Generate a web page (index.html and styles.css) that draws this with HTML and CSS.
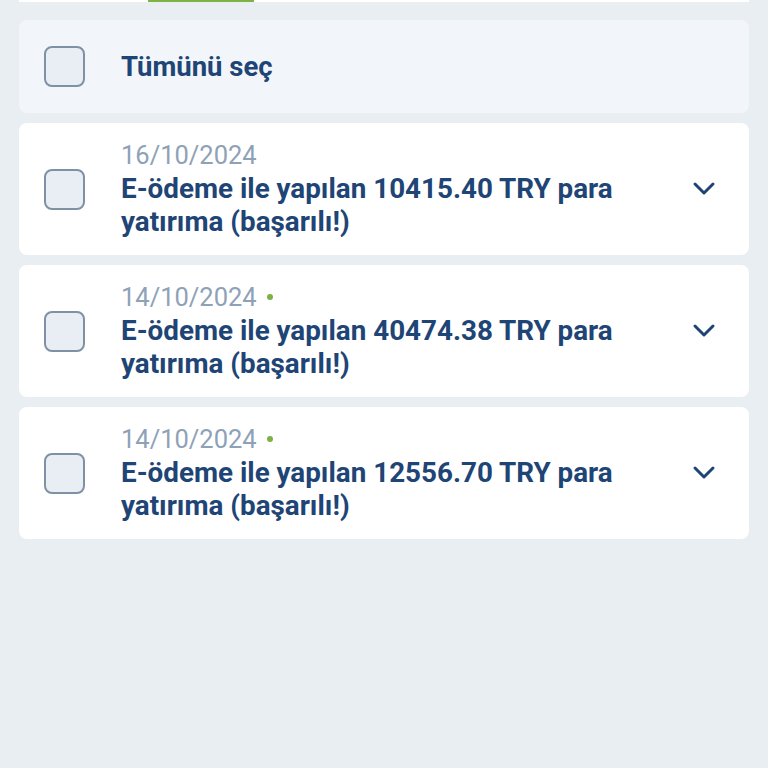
FILE: index.html
```html
<!DOCTYPE html>
<html lang="tr">

<head>
    <meta charset="UTF-8">
    <meta name="viewport" content="width=device-width, initial-scale=1.0">
    <title>İşlemler</title>
    <link rel="stylesheet" href="styles.css">
</head>

<body>
    <div class="tabs">
        <span class="tab-active"></span>
    </div>

    <div class="list">
        <div class="select-all">
            <span class="check"></span>
            <h4>Tümünü seç</h4>
        </div>

        <div class="item">
            <span class="check"></span>
            <div class="info">
                <p class="date">16/10/2024</p>
                <h4>E-ödeme ile yapılan 10415.40 TRY para yatırıma (başarılı!)</h4>
            </div>
            <svg class="chevron" width="24" height="16" viewBox="0 0 24 16">
                <path d="M3 3 L12 12 L21 3" fill="none" stroke="#1f4474" stroke-width="3" stroke-linecap="round" stroke-linejoin="round" />
            </svg>
        </div>

        <div class="item">
            <span class="check"></span>
            <div class="info">
                <p class="date">14/10/2024 <span class="dot"></span></p>
                <h4>E-ödeme ile yapılan 40474.38 TRY para yatırıma (başarılı!)</h4>
            </div>
            <svg class="chevron" width="24" height="16" viewBox="0 0 24 16">
                <path d="M3 3 L12 12 L21 3" fill="none" stroke="#1f4474" stroke-width="3" stroke-linecap="round" stroke-linejoin="round" />
            </svg>
        </div>

        <div class="item">
            <span class="check"></span>
            <div class="info">
                <p class="date">14/10/2024 <span class="dot"></span></p>
                <h4>E-ödeme ile yapılan 12556.70 TRY para yatırıma (başarılı!)</h4>
            </div>
            <svg class="chevron" width="24" height="16" viewBox="0 0 24 16">
                <path d="M3 3 L12 12 L21 3" fill="none" stroke="#1f4474" stroke-width="3" stroke-linecap="round" stroke-linejoin="round" />
            </svg>
        </div>
    </div>
</body>

</html>
```

FILE: styles.css
```css
* {
    margin: 0;
    padding: 0;
    box-sizing: border-box;
    font-family: Roboto, "Liberation Sans", sans-serif;
}

body {
    background-color: #e9eef3;
    height: 768px;
}

.tabs {
    height: 2px;
    margin: 0 19px;
    background-color: white;
}

.tab-active {
    display: block;
    width: 106px;
    height: 2px;
    margin-left: 129px;
    background-color: #7cb342;
}

.list {
    display: flex;
    flex-direction: column;
    gap: 10px;
    padding: 18px 19px;
}

.select-all,
.item {
    display: flex;
    align-items: center;
    border-radius: 8px;
    padding: 0 25px;
}

.select-all {
    height: 93px;
    background-color: #f2f6fa;
}

.item {
    min-height: 132px;
    background-color: white;
}

.check {
    flex: none;
    width: 41px;
    height: 41px;
    border: 2px solid #7f91a5;
    border-radius: 8px;
    background-color: #e9eef4;
    margin-right: 36px;
}

h4 {
    color: #1e4575;
    font-size: 27.8px;
    font-weight: 700;
    line-height: 33px;
}

.select-all h4 {
    font-size: 27.5px;
}

.info {
    flex: 1;
    padding: 2px 60px 2px 0;
}

.info h4 {
    margin-top: 2px;
}

.date {
    color: #8ea2b7;
    font-size: 25.5px;
    line-height: 30px;
    display: flex;
    align-items: center;
    gap: 10px;
}

.dot {
    width: 6px;
    height: 6px;
    border-radius: 50%;
    background-color: #7cb342;
}

.chevron {
    flex: none;
    margin-right: 8px;
}
```
